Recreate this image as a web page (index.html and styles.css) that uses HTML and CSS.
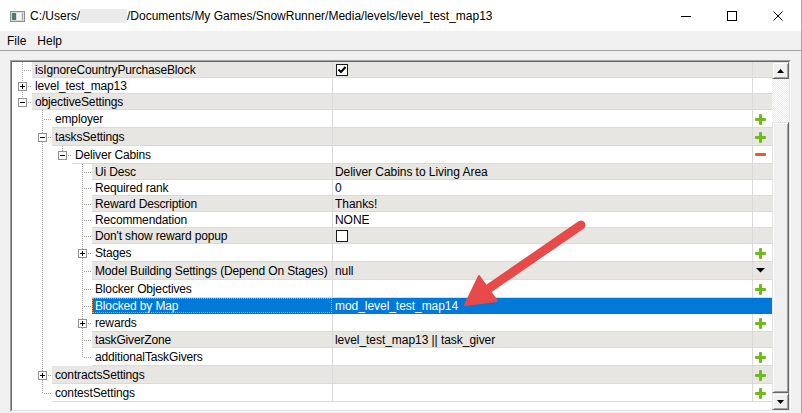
FILE: index.html
```html
<!DOCTYPE html>
<html>
<head>
<meta charset="utf-8">
<link rel="stylesheet" href="styles.css">
</head>
<body>
<div class="window">
  <div class="titlebar">
    <svg class="app-icon" width="15" height="11" viewBox="0 0 15 11">
      <rect x="0.5" y="0.5" width="14" height="10" fill="#dcdcdc" stroke="#8c8c8c"/>
      <rect x="2" y="2" width="4" height="7" fill="#4e7a70"/>
      <rect x="7" y="2" width="4" height="7" fill="#f6f6f6"/>
      <rect x="12" y="2" width="1" height="7" fill="#b0b0b0"/>
    </svg>
    <span class="title">C:/Users/<span class="blur"></span>/Documents/My Games/SnowRunner/Media/levels/level_test_map13</span>
    <div class="controls">
      <div class="ctl"><svg width="10" height="10" viewBox="0 0 10 10"><rect x="0" y="5" width="10" height="1" fill="#000"/></svg></div>
      <div class="ctl"><svg width="10" height="10" viewBox="0 0 10 10"><rect x="0.5" y="0.5" width="9" height="9" fill="none" stroke="#000"/></svg></div>
      <div class="ctl"><svg width="10" height="10" viewBox="0 0 10 10"><path d="M0.5 0.5 L9.5 9.5 M9.5 0.5 L0.5 9.5" stroke="#000" stroke-width="1"/></svg></div>
    </div>
  </div>
  <div class="menubar"><span class="menu">File</span><span class="menu">Help</span></div>
  <div class="content">
    <div class="frame"><div class="frame-in">
      <div class="tree">
        <div class="row odd"><i class="g tee"></i><div class="cells"><div class="name">isIgnoreCountryPurchaseBlock</div><div class="value"><span class="check on"><svg width="10" height="10" viewBox="0 0 10 10"><path d="M1.5 4.5 L4 7 L8.5 2" fill="none" stroke="#000" stroke-width="2"/></svg></span></div><div class="btn"></div></div></div>
        <div class="row"><i class="g tee"><b class="box plus"></b></i><div class="cells"><div class="name">level_test_map13</div><div class="value"></div><div class="btn"></div></div></div>
        <div class="row odd"><i class="g ell"><b class="box"></b></i><div class="cells"><div class="name">objectiveSettings</div><div class="value"></div><div class="btn"></div></div></div>
        <div class="row tall"><i class="g"></i><i class="g tee"></i><div class="cells"><div class="name">employer</div><div class="value"></div><div class="btn"><span class="ico plus"></span></div></div></div>
        <div class="row tall odd"><i class="g"></i><i class="g tee"><b class="box"></b></i><div class="cells"><div class="name">tasksSettings</div><div class="value"></div><div class="btn"><span class="ico plus"></span></div></div></div>
        <div class="row tall"><i class="g"></i><i class="g pipe"></i><i class="g ell"><b class="box"></b></i><div class="cells"><div class="name">Deliver Cabins</div><div class="value"></div><div class="btn"><span class="ico minus"></span></div></div></div>
        <div class="row odd"><i class="g"></i><i class="g pipe"></i><i class="g"></i><i class="g tee"></i><div class="cells"><div class="name">Ui Desc</div><div class="value">Deliver Cabins to Living Area</div><div class="btn"></div></div></div>
        <div class="row"><i class="g"></i><i class="g pipe"></i><i class="g"></i><i class="g tee"></i><div class="cells"><div class="name">Required rank</div><div class="value">0</div><div class="btn"></div></div></div>
        <div class="row odd"><i class="g"></i><i class="g pipe"></i><i class="g"></i><i class="g tee"></i><div class="cells"><div class="name">Reward Description</div><div class="value">Thanks!</div><div class="btn"></div></div></div>
        <div class="row"><i class="g"></i><i class="g pipe"></i><i class="g"></i><i class="g tee"></i><div class="cells"><div class="name">Recommendation</div><div class="value">NONE</div><div class="btn"></div></div></div>
        <div class="row odd"><i class="g"></i><i class="g pipe"></i><i class="g"></i><i class="g tee"></i><div class="cells"><div class="name">Don't show reward popup</div><div class="value"><span class="check"></span></div><div class="btn"></div></div></div>
        <div class="row tall"><i class="g"></i><i class="g pipe"></i><i class="g"></i><i class="g tee"><b class="box plus"></b></i><div class="cells"><div class="name">Stages</div><div class="value"></div><div class="btn"><span class="ico plus"></span></div></div></div>
        <div class="row tall odd"><i class="g"></i><i class="g pipe"></i><i class="g"></i><i class="g tee"></i><div class="cells"><div class="name">Model Building Settings (Depend On Stages)</div><div class="value">null</div><div class="btn"><svg class="drop" width="9" height="5" viewBox="0 0 9 5"><polygon points="0,0 9,0 4.5,4.5" fill="#000"/></svg></div></div></div>
        <div class="row tall"><i class="g"></i><i class="g pipe"></i><i class="g"></i><i class="g tee"></i><div class="cells"><div class="name">Blocker Objectives</div><div class="value"></div><div class="btn"><span class="ico plus"></span></div></div></div>
        <div class="row odd selected"><i class="g"></i><i class="g pipe"></i><i class="g"></i><i class="g tee"></i><div class="cells"><div class="name">Blocked by Map</div><div class="value">mod_level_test_map14</div><div class="btn"></div></div></div>
        <div class="row tall"><i class="g"></i><i class="g pipe"></i><i class="g"></i><i class="g tee"><b class="box plus"></b></i><div class="cells"><div class="name">rewards</div><div class="value"></div><div class="btn"><span class="ico plus"></span></div></div></div>
        <div class="row odd"><i class="g"></i><i class="g pipe"></i><i class="g"></i><i class="g tee"></i><div class="cells"><div class="name">taskGiverZone</div><div class="value">level_test_map13 || task_giver</div><div class="btn"></div></div></div>
        <div class="row tall"><i class="g"></i><i class="g pipe"></i><i class="g"></i><i class="g ell"></i><div class="cells"><div class="name">additionalTaskGivers</div><div class="value"></div><div class="btn"><span class="ico plus"></span></div></div></div>
        <div class="row tall odd"><i class="g"></i><i class="g tee"><b class="box plus"></b></i><div class="cells"><div class="name">contractsSettings</div><div class="value"></div><div class="btn"><span class="ico plus"></span></div></div></div>
        <div class="row tall"><i class="g"></i><i class="g ell"></i><div class="cells"><div class="name">contestSettings</div><div class="value"></div><div class="btn"><span class="ico plus"></span></div></div></div>
      </div>
      <div class="scrollbar">
        <div class="sb-btn"><svg width="7" height="4" viewBox="0 0 7 4"><polygon points="3.5,0 7,4 0,4" fill="#000"/></svg></div>
        <div class="sb-track"></div>
        <div class="sb-thumb"></div>
        <div class="sb-btn"><svg width="7" height="4" viewBox="0 0 7 4"><polygon points="0,0 7,0 3.5,4" fill="#000"/></svg></div>
      </div>
    </div></div>
  </div>
  <svg class="callout" width="802" height="413" viewBox="0 0 802 413">
    <line x1="581" y1="225" x2="488" y2="289" stroke="#e84a4a" stroke-width="9" stroke-linecap="round"/>
    <polygon points="465,305 479,276 497,301" fill="#e84a4a" stroke="#e84a4a" stroke-width="2" stroke-linejoin="round"/>
  </svg>
</div>
</body>
</html>
```

FILE: styles.css
```css
* { box-sizing: border-box; }
html, body { margin: 0; padding: 0; }
body {
  width: 802px; height: 413px; overflow: hidden;
  font-family: "Liberation Sans", Arial, sans-serif;
  font-size: 12px; color: #000; background: #f0f0f0;
}
.window {
  position: relative; width: 802px; height: 413px;
  background: #f0f0f0; border-right: 1px solid #a8a8a8;
  display: flex; flex-direction: column;
}
.titlebar {
  height: 31px; flex: none; background: #fff;
  display: flex; align-items: center; padding-left: 10px;
}
.app-icon { flex: none; margin-right: 5px; margin-top: 1px; }
.title { flex: 1; white-space: nowrap; display: flex; align-items: center; }
.blur { display: inline-block; width: 47px; height: 14px; background: #ebebeb; }
.controls { display: flex; height: 31px; }
.ctl { width: 46px; height: 31px; display: flex; align-items: center; justify-content: center; }
.menubar {
  height: 20px; flex: none; display: flex; align-items: center;
  padding: 1px 0 0 7px; border-bottom: 1px solid #a0a0a0;
}
.menu { margin-right: 11px; }
.content { flex: none; padding: 9px 10px 0 10px; }
.frame {
  border: 1px solid; border-color: #a0a0a0 #ffffff #ffffff #a0a0a0;
}
.frame-in {
  border: 1px solid; border-color: #696969 #e3e3e3 #e3e3e3 #696969;
  height: 350px; display: flex; background: #fff;
}
.tree { flex: 1; background: #fff; overflow: hidden; }
.row { display: flex; height: 16px; line-height: 14px; }
.row.tall { height: 18px; line-height: 16px; }
.g { width: 20px; flex: none; position: relative; display: block; }
.g.pipe::before, .g.tee::before, .g.ell::before {
  content: ""; position: absolute; left: 10px; top: 0; bottom: 0; width: 1px;
  background: repeating-linear-gradient(to bottom, #a0a0a0 0 1px, transparent 1px 2px);
}
.g.ell::before { bottom: auto; height: 50%; }
.g.tee::after, .g.ell::after {
  content: ""; position: absolute; left: 11px; right: 0; top: 50%; height: 1px;
  background: repeating-linear-gradient(to right, transparent 0 1px, #a0a0a0 1px 2px);
}
.box {
  position: absolute; left: 6px; top: calc(50% - 4px); width: 9px; height: 9px;
  border: 1px solid #919191; background: #fff; z-index: 1; display: block;
}
.box::before { content: ""; position: absolute; left: 1px; top: 3px; width: 5px; height: 1px; background: #000; }
.box.plus::after { content: ""; position: absolute; left: 3px; top: 1px; width: 1px; height: 5px; background: #000; }
.cells { flex: 1; display: flex; border-bottom: 1px solid #dadada; background: #fff; min-width: 0; }
.row.odd .cells { background: #e7e6e2; }
.name { flex: 1; padding: 1px 0 0 3px; white-space: nowrap; overflow: hidden; min-width: 0; letter-spacing: -0.15px; }
.value { width: 420px; flex: none; border-left: 1px solid #dadada; padding: 1px 0 0 2px; white-space: nowrap; overflow: hidden; letter-spacing: -0.05px; }
.btn { width: 20px; flex: none; border-left: 1px solid #dadada; position: relative; }
.row.selected .cells { background: #0078d7; border-bottom-color: #0078d7; color: #fff; }
.row.selected .value, .row.selected .btn { border-left-color: #0078d7; }
.row.selected .name { outline: 1px dotted #f0a040; outline-offset: -1px; }
.check {
  display: inline-block; width: 12px; height: 12px; border: 1px solid #1a1a1a;
  background: #fff; margin-left: 1px; margin-top: 1px; vertical-align: top; position: relative;
}
.check svg { position: absolute; left: 0; top: 0; }
.ico { position: absolute; left: 2px; display: block; }
.ico.plus { top: 4px; width: 11px; height: 11px; }
.ico.plus::before { content: ""; position: absolute; left: 0; top: 4px; width: 11px; height: 3px; background: #6ebb1b; border-radius: 1px; }
.ico.plus::after { content: ""; position: absolute; left: 4px; top: 0; width: 3px; height: 11px; background: #6ebb1b; border-radius: 1px; }
.ico.minus { top: 7px; width: 11px; height: 3px; background: #ef5a2c; border-radius: 1px; }
.drop { position: absolute; left: 3px; top: 6px; }
.scrollbar { width: 17px; flex: none; display: flex; flex-direction: column; }
.sb-btn, .sb-thumb {
  background: #f0f0f0;
  border: 1px solid; border-color: #e3e3e3 #696969 #696969 #e3e3e3;
  box-shadow: inset 1px 1px #fff, inset -1px -1px #a0a0a0;
}
.sb-btn { height: 17px; flex: none; display: flex; align-items: center; justify-content: center; }
.sb-track {
  height: 43px; flex: none;
  background: repeating-conic-gradient(#ffffff 0 25%, #ececec 0 50%) 0 0 / 2px 2px;
}
.sb-thumb { flex: 1; }
.callout { position: absolute; left: 0; top: 0; pointer-events: none; }
```
